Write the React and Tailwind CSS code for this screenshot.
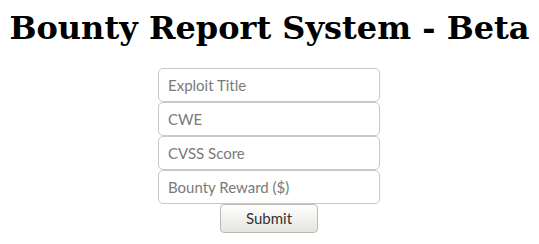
import React from "react";

const Field = ({ placeholder }) => (
	<input
		type="text"
		placeholder={placeholder}
		className="block w-[222px] h-[34px] px-[9px] rounded-[5px] border border-[#cbc7c3] bg-white font-['Lato','Open_Sans',sans-serif] text-[15px] text-[#333] placeholder:text-[#7a7a7a] outline-none"
	/>
);

export default function App() {
	return (
		<div className="w-[539px] h-[244px] bg-white">
			<h1 className="pt-[9px] text-center font-['DejaVu_Serif',serif] text-[32px] leading-[38px] font-bold text-black">
				Bounty Report System - Beta
			</h1>
			<form className="mt-[21px] pr-[1px] flex flex-col items-center">
				<Field placeholder="Exploit Title" />
				<Field placeholder="CWE" />
				<Field placeholder="CVSS Score" />
				<Field placeholder="Bounty Reward ($)" />
				<button
					type="button"
					className="w-[98px] h-[29px] rounded-[4px] border border-[#bcbab6] bg-gradient-to-b from-white to-[#e6e4e0] font-['Lato','Open_Sans',sans-serif] text-[15px] text-[#333]"
				>
					Submit
				</button>
			</form>
		</div>
	);
}
